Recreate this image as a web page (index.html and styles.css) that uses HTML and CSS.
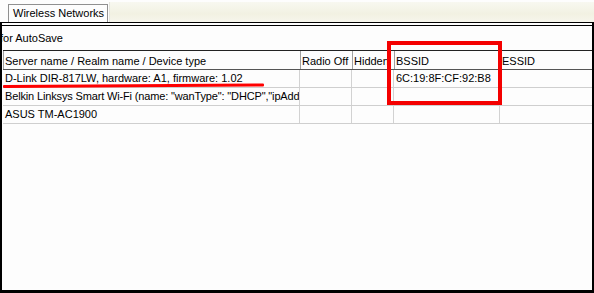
FILE: index.html
```html
<!DOCTYPE html>
<html>
<head>
<meta charset="utf-8">
<link rel="stylesheet" href="styles.css">
</head>
<body>
<div class="screen">
  <div class="tabstrip">
    <div class="tab">Wireless Networks</div>
    <div class="tabfill"></div>
  </div>
  <div class="frame">
    <div class="panel">
      <div class="caption">for AutoSave</div>
      <div class="table">
        <div class="row head">
          <div class="cell c1">Server name / Realm name / Device type</div>
          <div class="cell c2">Radio Off</div>
          <div class="cell c3">Hidden</div>
          <div class="cell c4">BSSID</div>
          <div class="cell c5">ESSID</div>
        </div>
        <div class="row">
          <div class="cell c1">D-Link DIR-817LW, hardware: A1, firmware: 1.02</div>
          <div class="cell c2"></div>
          <div class="cell c3"></div>
          <div class="cell c4">6C:19:8F:CF:92:B8</div>
          <div class="cell c5"></div>
        </div>
        <div class="row">
          <div class="cell c1 tight">Belkin Linksys Smart Wi-Fi (name: "wanType": "DHCP","ipAddr</div>
          <div class="cell c2"></div>
          <div class="cell c3"></div>
          <div class="cell c4"></div>
          <div class="cell c5"></div>
        </div>
        <div class="row">
          <div class="cell c1">ASUS TM-AC1900</div>
          <div class="cell c2"></div>
          <div class="cell c3"></div>
          <div class="cell c4"></div>
          <div class="cell c5"></div>
        </div>
      </div>
    </div>
  </div>
  <div class="underline"></div>
  <div class="redbox"></div>
</div>
</body>
</html>
```
FILE: styles.css
```css
html, body {
  margin: 0;
  padding: 0;
  background: #fdfdfd;
}
.screen {
  position: relative;
  width: 594px;
  height: 293px;
  overflow: hidden;
  font-family: "Liberation Sans", Arial, sans-serif;
  font-size: 11px;
  color: #000;
  display: flex;
  flex-direction: column;
}
.tabstrip {
  height: 22px;
  display: flex;
  align-items: flex-end;
  padding-left: 8px;
  background: #fdfdfd;
  flex: none;
}
.tab {
  height: 17px;
  line-height: 17px;
  border: 1px solid #909090;
  border-bottom: none;
  padding: 0 3px 0 4px;
  background: #fdfdfd;
  white-space: nowrap;
}
.tabfill {
  flex: 1;
  height: 20px;
  margin-left: 1px;
  border-left: 1px solid #e4e4dc;
  background: linear-gradient(to bottom, #f8f8f0 0%, #f2f1e2 60%, #f6f5ec 100%);
}
.frame {
  flex: 1;
  border-top: 1px solid #000;
  border-left: 2px solid #000;
  border-right: 2px solid #000;
  border-bottom: 3px solid #000;
  display: flex;
  flex-direction: column;
}
.panel {
  flex: 1;
  margin-top: 2px;
  border-top: 1px solid #000;
  display: flex;
  flex-direction: column;
}
.caption {
  height: 24px;
  line-height: 24px;
  margin-left: -2px;
  white-space: nowrap;
}
.table {
  border-top: 1px solid #222;
  margin-left: 1px;
}
.row {
  display: grid;
  grid-template-columns: 297px 52px 42px 106px 1fr;
  height: 17px;
  border-bottom: 1px solid #cfcfcf;
}
.row.head {
  height: 18px;
  border-bottom: 1px solid #555;
}
.cell {
  padding-left: 2px;
  line-height: 16px;
  white-space: nowrap;
  overflow: hidden;
  border-right: 1px solid #d2d2d2;
}
.head .cell {
  line-height: 20px;
  border-right: none;
  border-left: 1px solid #a0a0a0;
  padding-left: 1px;
}
.row .c5 {
  border-right: none;
}
.tight {
  letter-spacing: -0.15px;
}
.underline {
  position: absolute;
  left: 3px;
  top: 85px;
  width: 261px;
  height: 3px;
  background: #f00;
  transform: rotate(-0.35deg);
  transform-origin: left center;
  border-radius: 1px;
}
.redbox {
  position: absolute;
  left: 387px;
  top: 41px;
  width: 115px;
  height: 64px;
  box-sizing: border-box;
  border: 4px solid #f40000;
}
```
